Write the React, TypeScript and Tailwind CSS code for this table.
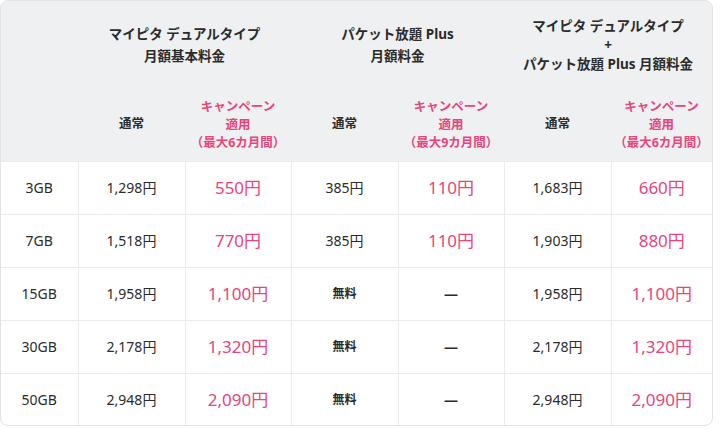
const rows = [
  { gb: "3GB", a: "1,298円", b: "550円", c: "385円", d: "110円", e: "1,683円", f: "660円" },
  { gb: "7GB", a: "1,518円", b: "770円", c: "385円", d: "110円", e: "1,903円", f: "880円" },
  { gb: "15GB", a: "1,958円", b: "1,100円", c: "無料", d: "—", e: "1,958円", f: "1,100円" },
  { gb: "30GB", a: "2,178円", b: "1,320円", c: "無料", d: "—", e: "2,178円", f: "1,320円" },
  { gb: "50GB", a: "2,948円", b: "2,090円", c: "無料", d: "—", e: "2,948円", f: "2,090円" },
];

const font = "font-['Noto_Sans','Noto_Sans_CJK_JP',sans-serif]";

function Campaign({ months }: { months: number }) {
  return (
    <span className="block text-[12.5px] font-bold leading-[18px] text-[#e8457c]">
      キャンペーン
      <br />
      適用
      <br />
      （最大{months}カ月間）
    </span>
  );
}

export default function App() {
  const cell = "border-l border-t border-[#ebebeb] text-center align-middle";
  const pink = "text-[17px] text-[#e8457c]";
  const plain = "text-[14px] text-[#2b2b2b]";
  return (
    <div className={`h-[429px] w-[720px] bg-white ${font}`}>
      <div className="h-[426px] w-[713px] overflow-hidden rounded-[8px] border border-[#e3e3e3]">
        <table className="h-full w-full table-fixed border-collapse">
          <colgroup>
            <col className="w-[77px]" />
            <col className="w-[107px]" />
            <col className="w-[106px]" />
            <col className="w-[107px]" />
            <col className="w-[106px]" />
            <col className="w-[107px]" />
            <col />
          </colgroup>
          <thead className="bg-[#eef0f1] text-[#2b2b2b]">
            <tr className="h-[88px] text-[13.5px] font-bold leading-[22px]">
              <th />
              <th colSpan={2} className="font-bold">
                マイピタ デュアルタイプ
                <br />
                月額基本料金
              </th>
              <th colSpan={2} className="font-bold">
                パケット放題 Plus
                <br />
                月額料金
              </th>
              <th colSpan={2} className="font-bold leading-[19px]">
                マイピタ デュアルタイプ
                <br />+<br />
                パケット放題 Plus 月額料金
              </th>
            </tr>
            <tr className="h-[72px] text-[12.5px] font-bold">
              <th />
              <th className="font-bold">通常</th>
              <th>
                <Campaign months={6} />
              </th>
              <th className="font-bold">通常</th>
              <th>
                <Campaign months={9} />
              </th>
              <th className="font-bold">通常</th>
              <th>
                <Campaign months={6} />
              </th>
            </tr>
          </thead>
          <tbody>
            {rows.map((r) => (
              <tr key={r.gb} className="h-[53px]">
                <td className={`${cell} border-l-0 ${plain}`}>{r.gb}</td>
                <td className={`${cell} ${plain}`}>{r.a}</td>
                <td className={`${cell} ${pink}`}>{r.b}</td>
                <td className={`${cell} ${r.c === "無料" ? "text-[12px] font-bold text-[#2b2b2b]" : plain}`}>{r.c}</td>
                <td className={`${cell} ${r.d === "—" ? "text-[14px] font-bold text-[#2b2b2b]" : pink}`}>{r.d}</td>
                <td className={`${cell} ${plain}`}>{r.e}</td>
                <td className={`${cell} ${pink}`}>{r.f}</td>
              </tr>
            ))}
          </tbody>
        </table>
      </div>
    </div>
  );
}
